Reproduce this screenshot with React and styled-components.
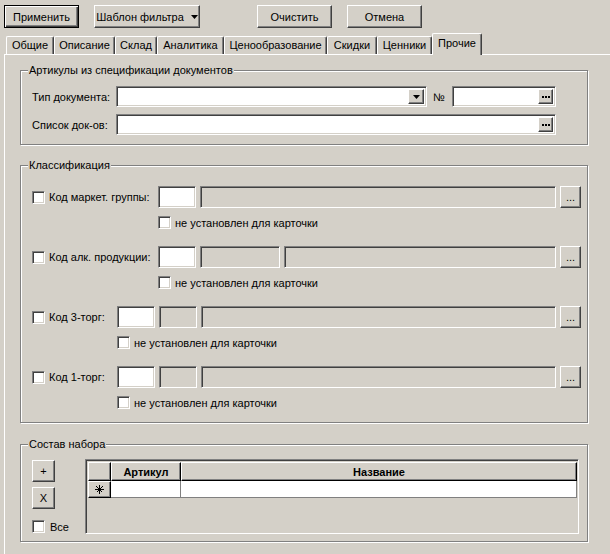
import React from 'react';
import styled, { createGlobalStyle, css } from 'styled-components';

const face = '#d4d0c8';
const shadow = '#808080';
const dark = '#404040';

const GlobalStyle = createGlobalStyle`
  html, body {
    margin: 0;
    padding: 0;
    background: ${face};
    overflow: hidden;
  }
  body {
    font-family: "Liberation Sans", Arial, sans-serif;
    font-size: 11px;
    color: #000;
  }
`;

const raised = css`
  border: 1px solid;
  border-color: #fff ${dark} ${dark} #fff;
  box-shadow: inset -1px -1px 0 ${shadow};
`;

const sunken = css`
  border: 1px solid;
  border-color: ${shadow} #fff #fff ${shadow};
  box-shadow: inset 1px 1px 0 ${dark}, inset -1px -1px 0 ${face};
`;

const Window = styled.div`
  width: 610px;
  height: 554px;
  display: flex;
  flex-direction: column;
  overflow: hidden;
`;

const Toolbar = styled.div`
  display: flex;
  align-items: center;
  padding: 5px 0 0 4px;
`;

const Button = styled.button`
  box-sizing: border-box;
  height: ${p => p.$h || 23}px;
  width: ${p => p.$w}px;
  margin-left: ${p => p.$ml || 0}px;
  flex-shrink: 0;
  padding: 0;
  background: ${face};
  font: 11px "Liberation Sans", Arial, sans-serif;
  color: #000;
  display: flex;
  align-items: center;
  justify-content: center;
  gap: 7px;
  ${raised}
  ${p => p.$default && css`
    border-color: #000;
    box-shadow: inset 1px 1px 0 #fff, inset -1px -1px 0 ${dark}, inset -2px -2px 0 ${shadow};
  `}
`;

const TabStrip = styled.div`
  display: flex;
  align-items: flex-end;
  height: 21px;
  margin-top: 5px;
  padding-left: 6px;
  position: relative;
  z-index: 1;
`;

const Tab = styled.div`
  box-sizing: border-box;
  width: ${p => p.$w}px;
  height: ${p => (p.$active ? 22 : 18)}px;
  margin-bottom: ${p => (p.$active ? -1 : 0)}px;
  padding-top: ${p => (p.$active ? 3 : 2)}px;
  background: ${face};
  border-left: 1px solid #fff;
  border-top: 1px solid #fff;
  border-right: 1px solid ${dark};
  border-radius: 2px 2px 0 0;
  box-shadow: inset -1px 0 0 ${shadow};
  text-align: center;
  white-space: nowrap;
`;

const Page = styled.div`
  flex: 1;
  margin: 0 -20px 0 4px;
  border-top: 1px solid #fff;
  border-left: 1px solid #fff;
  padding: 15px 0 0 15px;
`;

const Group = styled.div`
  position: relative;
  box-sizing: border-box;
  width: 568px;
  margin-top: ${p => p.$mt || 0}px;
  padding: ${p => p.$pad};
  border: 1px solid ${shadow};
  box-shadow: inset 1px 1px 0 #fff, 1px 1px 0 #fff;
`;

const Caption = styled.span`
  position: absolute;
  top: -7px;
  left: 7px;
  padding: 0 1px;
  line-height: 13px;
  background: ${face};
  white-space: nowrap;
`;

const FormRow = styled.div`
  display: flex;
  align-items: center;
  height: 21px;
  & + & {
    margin-top: 7px;
  }
`;

const Label = styled.span`
  width: ${p => p.$w}px;
  flex-shrink: 0;
  white-space: nowrap;
`;

const Field = styled.div`
  box-sizing: border-box;
  height: ${p => p.$h || 21}px;
  width: ${p => (p.$w ? `${p.$w}px` : 'auto')};
  flex: ${p => (p.$w ? '0 0 auto' : '1 1 0')};
  padding: 1px;
  background: ${p => (p.$readonly ? face : '#fff')};
  display: flex;
  justify-content: flex-end;
  align-items: stretch;
  ${sunken}
`;

const InnerButton = styled.div`
  box-sizing: border-box;
  width: ${p => p.$w || 16}px;
  margin: 1px;
  display: flex;
  align-items: center;
  justify-content: center;
  background: ${face};
  ${raised}
`;

const NumberSign = styled.span`
  margin: 0 0 0 6px;
  width: 19px;
`;

const ClassBlock = styled.div`
  & + & {
    margin-top: 17px;
  }
`;

const ClassRow = styled.div`
  display: flex;
  align-items: center;
  gap: 4px;
  width: 549px;
  height: 22px;
`;

const CheckRow = styled.label`
  display: flex;
  align-items: center;
  gap: ${p => p.$gap || 4}px;
  height: 13px;
  margin-top: ${p => p.$mt || 0}px;
  padding-left: ${p => p.$indent || 0}px;
  white-space: nowrap;
`;

const Check = styled.span`
  box-sizing: border-box;
  width: 13px;
  height: 13px;
  flex-shrink: 0;
  background: #fff;
  ${sunken}
`;

const SetBody = styled.div`
  display: flex;
  align-items: flex-start;
`;

const SideColumn = styled.div`
  width: 53px;
  padding-top: 1px;
  display: flex;
  flex-direction: column;
  gap: 5px;
`;

const Grid = styled.div`
  box-sizing: border-box;
  width: 494px;
  height: 75px;
  padding: 1px;
  background: ${face};
  ${sunken}
`;

const GridRow = styled.div`
  display: flex;
  height: ${p => p.$h}px;
  margin: 1px 0 0 1px;
  & + & {
    margin-top: 0;
  }
`;

const HeadCell = styled.div`
  box-sizing: border-box;
  width: ${p => (p.$w ? `${p.$w}px` : 'auto')};
  flex: ${p => (p.$w ? '0 0 auto' : '1 1 0')};
  display: flex;
  align-items: center;
  justify-content: center;
  font-weight: bold;
  background: ${face};
  border-top: 1px solid #fff;
  border-left: 1px solid #fff;
  border-right: 1px solid #000;
  border-bottom: 1px solid #000;
  box-shadow: inset -1px -1px 0 ${shadow};
`;

const DataCell = styled.div`
  box-sizing: border-box;
  width: ${p => (p.$w ? `${p.$w}px` : 'auto')};
  flex: ${p => (p.$w ? '0 0 auto' : '1 1 0')};
  background: #fff;
  border-right: 1px solid ${shadow};
  border-bottom: 1px solid ${shadow};
`;

const Arrow = () => (
  <svg width="7" height="4" viewBox="0 0 7 4">
    <polygon points="0,0 7,0 3.5,4" fill="#000" />
  </svg>
);

const Dots = () => (
  <svg width="8" height="2" viewBox="0 0 8 2">
    <rect x="0" y="0" width="2" height="2" fill="#000" />
    <rect x="3" y="0" width="2" height="2" fill="#000" />
    <rect x="6" y="0" width="2" height="2" fill="#000" />
  </svg>
);

const Star = () => (
  <svg width="9" height="9" viewBox="0 0 9 9" stroke="#000" strokeWidth="1" shapeRendering="crispEdges">
    <line x1="4.5" y1="0" x2="4.5" y2="9" />
    <line x1="0" y1="4.5" x2="9" y2="4.5" />
    <line x1="1.5" y1="1.5" x2="7.5" y2="7.5" />
    <line x1="7.5" y1="1.5" x2="1.5" y2="7.5" />
  </svg>
);

const tabs = [
  ['Общие', 48],
  ['Описание', 61],
  ['Склад', 42],
  ['Аналитика', 67],
  ['Ценообразование', 103],
  ['Скидки', 50],
  ['Ценники', 55],
  ['Прочие', 50],
];

const classRows = [
  { label: 'Код маркет. группы:', labelW: 105, fields: [38, null] },
  { label: 'Код алк. продукции:', labelW: 105, fields: [38, 80, null] },
  { label: 'Код 3-торг:', labelW: 64, fields: [38, 38, null] },
  { label: 'Код 1-торг:', labelW: 64, fields: [38, 38, null] },
];

export default function App() {
  return (
    <Window>
      <GlobalStyle />
      <Toolbar>
        <Button $default $w={75}>Применить</Button>
        <Button $w={106} $ml={15}>Шаблон фильтра <Arrow /></Button>
        <Button $w={75} $ml={57}>Очистить</Button>
        <Button $w={75} $ml={15}>Отмена</Button>
      </Toolbar>

      <TabStrip>
        {tabs.map(([name, w]) => (
          <Tab key={name} $w={w} $active={name === 'Прочие'}>{name}</Tab>
        ))}
      </TabStrip>

      <Page>
        <Group $pad="15px 0 9px 11px">
          <Caption>Артикулы из спецификации документов</Caption>
          <FormRow>
            <Label $w={84}>Тип документа:</Label>
            <Field $w={311}>
              <InnerButton><Arrow /></InnerButton>
            </Field>
            <NumberSign>№</NumberSign>
            <Field $w={104}>
              <InnerButton $w={15}><Dots /></InnerButton>
            </Field>
          </FormRow>
          <FormRow>
            <Label $w={84}>Список док-ов:</Label>
            <Field $w={440}>
              <InnerButton $w={15}><Dots /></InnerButton>
            </Field>
          </FormRow>
        </Group>

        <Group $mt={20} $pad="20px 0 13px 11px">
          <Caption>Классификация</Caption>
          {classRows.map(row => (
            <ClassBlock key={row.label}>
              <ClassRow>
                <Check />
                <Label $w={row.labelW}>{row.label}</Label>
                {row.fields.map((w, i) => (
                  <Field key={i} $h={22} $w={w} $readonly={i > 0} />
                ))}
                <Button $w={21} $h={22}>...</Button>
              </ClassRow>
              <CheckRow $mt={8} $indent={row.labelW + 21}>
                <Check />
                не установлен для карточки
              </CheckRow>
            </ClassBlock>
          ))}
        </Group>

        <Group $mt={21} $pad="14px 0 7px 11px">
          <Caption>Состав набора</Caption>
          <SetBody>
            <SideColumn>
              <Button $w={23} $h={22}>+</Button>
              <Button $w={23} $h={22}>X</Button>
              <CheckRow $mt={6} $gap={5}>
                <Check />
                Все
              </CheckRow>
            </SideColumn>
            <Grid>
              <GridRow $h={19}>
                <HeadCell $w={23} />
                <HeadCell $w={70}>Артикул</HeadCell>
                <HeadCell>Название</HeadCell>
              </GridRow>
              <GridRow $h={17}>
                <HeadCell $w={23}><Star /></HeadCell>
                <DataCell $w={70} />
                <DataCell />
              </GridRow>
            </Grid>
          </SetBody>
        </Group>
      </Page>
    </Window>
  );
}
